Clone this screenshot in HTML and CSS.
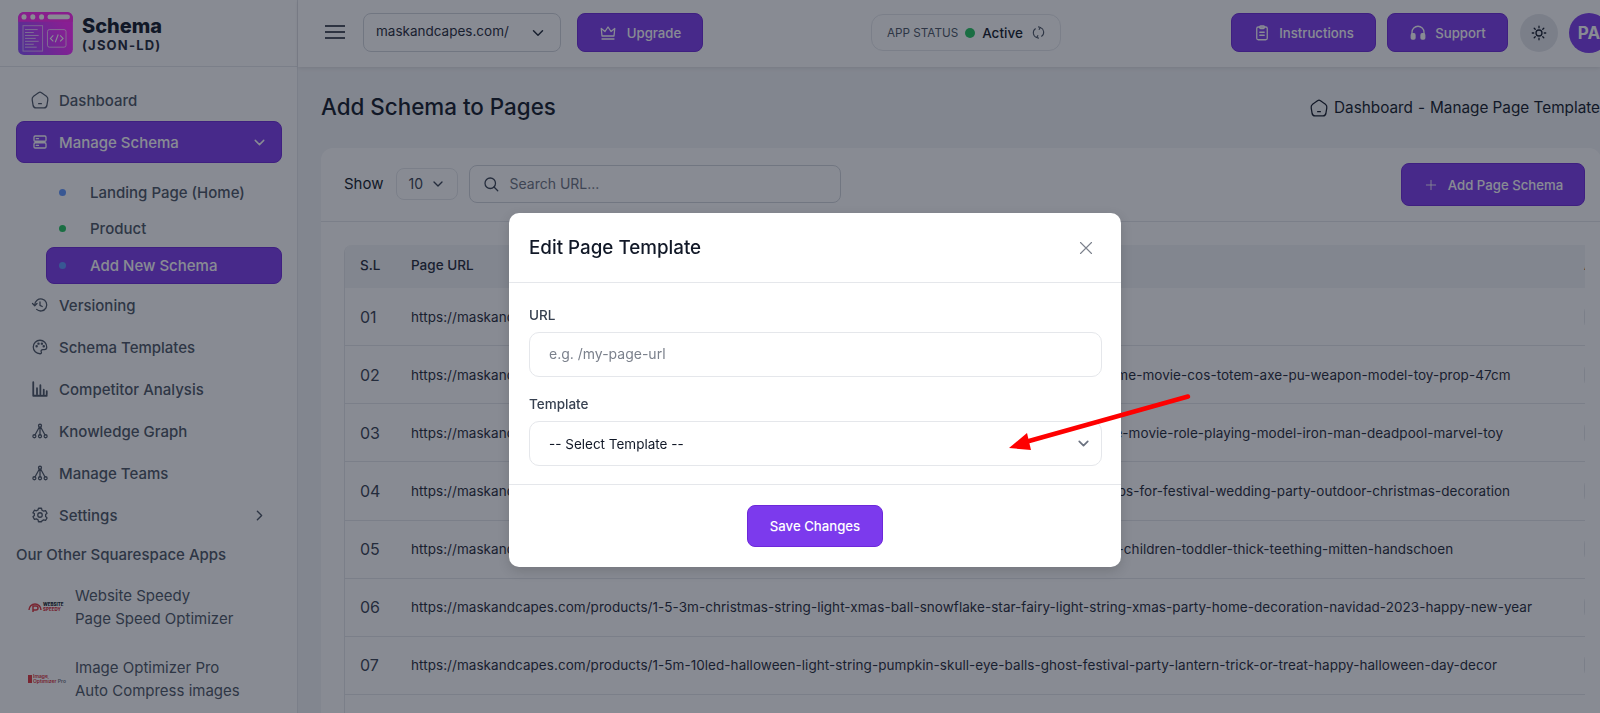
FILE: index.html
```html
<!DOCTYPE html>
<html lang="en">
<head>
    <meta charset="UTF-8">
    <meta name="viewport" content="width=device-width, initial-scale=1.0">
    <title>Schema (JSON-LD) - Add Schema to Pages</title>
    <link rel="stylesheet" href="styles.css">
</head>
<body>
    <div class="app">
        <aside class="sidebar">
            <div class="brand">
                <svg class="brand-logo" viewBox="0 0 56 44">
                    <defs>
                        <linearGradient id="logoGrad" x1="0" y1="1" x2="1" y2=".6">
                            <stop offset="0" stop-color="#8a4dff"/>
                            <stop offset="1" stop-color="#ff26ff"/>
                        </linearGradient>
                    </defs>
                    <rect width="56" height="44" rx="6" fill="url(#logoGrad)"/>
                    <path d="M0 10V6a6 6 0 0 1 6-6h44a6 6 0 0 1 6 6v4Z" fill="#ff26f0"/>
                    <circle cx="6" cy="5" r="2.6" fill="#fff"/>
                    <circle cx="15" cy="5" r="2.6" fill="#fff"/>
                    <circle cx="24" cy="5" r="2.6" fill="#fff"/>
                    <rect x="30" y="2.5" width="23" height="5" rx="2.5" fill="#fff"/>
                    <rect x="5" y="14" width="20" height="26" fill="none" stroke="#fff" stroke-opacity=".6"/>
                    <path d="M7 18h13M7 21h9M7 24h14M7 27h11M7 30h14M7 33h9M7 36h12" stroke="#fff" stroke-opacity=".7"/>
                    <rect x="30" y="18" width="19" height="18" rx="2" fill="none" stroke="#fff" stroke-opacity=".7"/>
                    <path d="M36 24l-3 3 3 3M43 24l3 3-3 3M41 23l-3 8" fill="none" stroke="#fff" stroke-width="1.1"/>
                </svg>
                <div class="brand-text">
                    <div class="brand-name">Schema</div>
                    <div class="brand-sub">(JSON-LD)</div>
                </div>
            </div>

            <nav class="nav">
                <a class="nav-item">
                    <svg class="ico ico-home" viewBox="0 0 24 24"><path d="M12 3.5Q13 3.5 19 8Q21 9.5 20.5 12L19.5 18Q19 20.5 16.5 20.5H7.5Q5 20.5 4.5 18L3.5 12Q3 9.5 5 8Q11 3.5 12 3.5Z"/><path d="M10.500 16h3"/></svg>
                    <span>Dashboard</span>
                </a>
                <a class="nav-item active">
                    <svg class="ico" viewBox="0 0 24 24"><rect x="4" y="4" width="16" height="7" rx="1.5"/><rect x="4" y="13" width="16" height="7" rx="1.5"/><path d="M7 7.5h3M7 16.5h3"/></svg>
                    <span>Manage Schema</span>
                    <svg class="chev" viewBox="0 0 24 24"><path d="M6 9l6 6 6-6"/></svg>
                </a>
                <div class="subnav">
                    <a class="sub-item"><i class="dot dot-blue"></i>Landing Page (Home)</a>
                    <a class="sub-item"><i class="dot dot-green"></i>Product</a>
                    <a class="sub-item active"><i class="dot dot-blue"></i>Add New Schema</a>
                </div>
                <a class="nav-item">
                    <svg class="ico" viewBox="0 0 24 24"><path d="M5 12a8 8 0 1 1 2.5 5.8"/><path d="M2 10l3 3 3-3"/><path d="M12 8v4.5l3 1.5"/></svg>
                    <span>Versioning</span>
                </a>
                <a class="nav-item">
                    <svg class="ico" viewBox="0 0 24 24"><path d="M12 3a9 9 0 1 0 0 18c1.800 0 2.300-1.200 1.700-2.300-.8-1.500.2-3.200 1.900-3.200H18c1.800 0 3-1.300 3-3.200C21 7 17 3 12 3Z"/><circle cx="7.500" cy="11" r=".8"/><circle cx="10" cy="7.500" r=".8"/><circle cx="14.500" cy="7.500" r=".8"/><circle cx="17" cy="11" r=".8"/></svg>
                    <span>Schema Templates</span>
                </a>
                <a class="nav-item">
                    <svg class="ico ico-bars" viewBox="0 0 24 24"><path d="M3 3v18h18"/><path d="M8 11v8M12.500 7v12M17 13v6M21 15v4"/></svg>
                    <span>Competitor Analysis</span>
                </a>
                <a class="nav-item">
                    <svg class="ico" viewBox="0 0 24 24"><circle cx="12" cy="5" r="2"/><circle cx="4.500" cy="19" r="2"/><circle cx="12" cy="19" r="2"/><circle cx="19.500" cy="19" r="2"/><path d="M11 7l-5.500 10M12 7v10M13 7l5.500 10"/></svg>
                    <span>Knowledge Graph</span>
                </a>
                <a class="nav-item">
                    <svg class="ico" viewBox="0 0 24 24"><circle cx="12" cy="5" r="2"/><circle cx="4.500" cy="19" r="2"/><circle cx="12" cy="19" r="2"/><circle cx="19.500" cy="19" r="2"/><path d="M11 7l-5.500 10M12 7v10M13 7l5.500 10"/></svg>
                    <span>Manage Teams</span>
                </a>
                <a class="nav-item">
                    <svg class="ico" viewBox="0 0 24 24"><circle cx="12" cy="12" r="3"/><path d="M10 3h4l.6 2.600 2.300 1.300 2.500-.8 2 3.500-1.900 1.800v2.600l1.900 1.800-2 3.500-2.500-.8-2.300 1.300L14 21h-4l-.6-2.600-2.300-1.300-2.500.8-2-3.500 1.900-1.800v-2.600L2.600 9.100l2-3.500 2.500.8 2.300-1.300Z"/></svg>
                    <span>Settings</span>
                    <svg class="chev" viewBox="0 0 24 24"><path d="M9 6l6 6-6 6"/></svg>
                </a>
            </nav>

            <div class="apps-title">Our Other Squarespace Apps</div>
            <a class="app-link">
                <div class="app-logo">
                    <svg viewBox="0 0 14 12"><path d="M1 9a6 6 0 0 1 12 0" fill="none" stroke="#e0343c" stroke-width="1.500"/><path d="M5 11V5h3a2 2 0 0 1 0 4H5" fill="none" stroke="#e0343c" stroke-width="1.500"/></svg>
                    <div class="app-logo-text"><b>WEBSITE</b><b class="red">SPEEDY</b></div>
                </div>
                <div>Website Speedy<br>Page Speed Optimizer</div>
            </a>
            <a class="app-link app-link-next">
                <div class="app-logo">
                    <svg class="app-logo-narrow" viewBox="0 0 6 12"><rect width="6" height="12" fill="#e0343c"/></svg>
                    <div class="app-logo-text app-logo-thin"><span class="red">Image</span><span class="red">Optimizer <em>Pro</em></span></div>
                </div>
                <div>Image Optimizer Pro<br>Auto Compress images</div>
            </a>
        </aside>

        <div class="main">
            <header class="topbar">
                <svg class="burger" viewBox="0 0 20 14"><path d="M0 1h20M0 7h20M0 13h20"/></svg>
                <div class="store-select">
                    <span>maskandcapes.com/</span>
                    <svg class="chev" viewBox="0 0 24 24"><path d="M6 9l6 6 6-6"/></svg>
                </div>
                <a class="btn btn-upgrade">
                    <svg class="ico" viewBox="0 0 24 24"><path d="M4 16L3 6l5 4 4-6 4 6 5-4-1 10Z"/><path d="M4 20h16"/></svg>
                    Upgrade
                </a>
                <div class="status">
                    <span class="status-label">APP STATUS</span>
                    <i class="status-dot"></i>
                    <span class="status-value">Active</span>
                    <svg class="ico" viewBox="0 0 24 24"><path d="M7 6a8 8 0 0 0 2 14"/><path d="M17 18a8 8 0 0 0-2-14"/><path d="M12 3l3 1-2 3M12 21l-3-1 2-3"/></svg>
                </div>
                <div class="topbar-right">
                    <a class="btn btn-instructions">
                        <svg class="ico" viewBox="0 0 24 24"><rect x="5" y="4" width="14" height="17" rx="2"/><rect x="9" y="2.500" width="6" height="3.500" rx="1"/><path d="M9 11h6M9 15h6"/></svg>
                        Instructions
                    </a>
                    <a class="btn btn-support">
                        <svg class="ico" viewBox="0 0 24 24"><path d="M4 14v-3a8 8 0 0 1 16 0v3"/><rect x="3" y="13" width="5" height="7" rx="1.500" fill="currentColor"/><rect x="16" y="13" width="5" height="7" rx="1.500" fill="currentColor"/></svg>
                        Support
                    </a>
                    <div class="theme-toggle">
                        <svg class="ico" viewBox="0 0 24 24"><circle cx="12" cy="12" r="4"/><path d="M12 3v2M12 19v2M3 12h2M19 12h2M5.600 5.600l1.400 1.400M17 17l1.400 1.400M5.600 18.400L7 17M17 7l1.400-1.400"/></svg>
                    </div>
                    <div class="avatar">PA</div>
                </div>
            </header>

            <section class="content">
                <div class="page-head">
                    <h1>Add Schema to Pages</h1>
                    <div class="crumbs">
                        <svg class="ico ico-home" viewBox="0 0 24 24"><path d="M12 3.500Q13 3.500 19 8Q21 9.500 20.500 12L19.500 18Q19 20.500 16.500 20.500H7.500Q5 20.500 4.500 18L3.500 12Q3 9.500 5 8Q11 3.500 12 3.500Z"/><path d="M10.500 16h3"/></svg>
                        <span>Dashboard</span><span class="crumb-sep">-</span><span>Manage Page Template</span>
                    </div>
                </div>

                <div class="card">
                    <div class="toolbar">
                        <span class="show-label">Show</span>
                        <div class="page-size">10
                            <svg class="chev" viewBox="0 0 24 24"><path d="M6 9l6 6 6-6"/></svg>
                        </div>
                        <div class="search">
                            <svg class="ico" viewBox="0 0 24 24"><circle cx="11" cy="11" r="7"/><path d="M16 16l5 5"/></svg>
                            <span>Search URL...</span>
                        </div>
                        <a class="btn btn-add">
                            <svg class="ico" viewBox="0 0 24 24"><path d="M12 5v14M5 12h14"/></svg>
                            Add Page Schema
                        </a>
                    </div>

                    <div class="table-wrap">
                        <table class="pages">
                            <thead>
                                <tr><th class="col-sl">S.L</th><th>Page URL</th><th class="col-action">Action</th></tr>
                            </thead>
                            <tbody>
                                <tr><td>01</td><td class="url">https://maskandcapes.com/</td><td><i class="row-btn"></i></td></tr>
                                <tr><td>02</td><td class="url">https://maskandcapes.com/products/hand-mades-1-1-scale-viking-warrior-replica-collectible-cosplay-for-game-movie-cos-totem-axe-pu-weapon-model-toy-prop-47cm</td><td><i class="row-btn"></i></td></tr>
                                <tr><td>03</td><td class="url">https://maskandcapes.com/products/premium-quality-xxl-1-1-scale-superhero-helmet-replica-cosplay-for-the-movie-role-playing-model-iron-man-deadpool-marvel-toy</td><td><i class="row-btn"></i></td></tr>
                                <tr><td>04</td><td class="url">https://maskandcapes.com/products/battery-powers-waterproof-usb-1-10m-copper-wire-led-string-light-lamps-for-festival-wedding-party-outdoor-christmas-decoration</td><td><i class="row-btn"></i></td></tr>
                                <tr><td>05</td><td class="url">https://maskandcapes.com/products/thick-wool-yarn-blends-1-pair-winter-warm-cartoon-animal-soft-knitted-children-toddler-thick-teething-mitten-handschoen</td><td><i class="row-btn"></i></td></tr>
                                <tr><td>06</td><td class="url">https://maskandcapes.com/products/1-5-3m-christmas-string-light-xmas-ball-snowflake-star-fairy-light-string-xmas-party-home-decoration-navidad-2023-happy-new-year</td><td><i class="row-btn"></i></td></tr>
                                <tr><td>07</td><td class="url">https://maskandcapes.com/products/1-5m-10led-halloween-light-string-pumpkin-skull-eye-balls-ghost-festival-party-lantern-trick-or-treat-happy-halloween-day-decor</td><td><i class="row-btn"></i></td></tr>
                                <tr><td>08</td><td class="url">https://maskandcapes.com/products/</td><td><i class="row-btn"></i></td></tr>
                            </tbody>
                        </table>
                    </div>
                </div>
            </section>
        </div>
    </div>

    <div class="overlay">
        <div class="modal">
            <div class="modal-head">
                <h2>Edit Page Template</h2>
                <svg class="modal-close" viewBox="0 0 14 14"><path d="M1.500 1.500l11 11M12.500 1.500l-11 11"/></svg>
            </div>
            <div class="modal-body">
                <label class="field-label">URL</label>
                <div class="field field-input"><span>e.g. /my-page-url</span></div>
                <label class="field-label field-label-next">Template</label>
                <div class="field field-select">
                    <span>-- Select Template --</span>
                    <svg class="chev" viewBox="0 0 24 24"><path d="M6 9l6 6 6-6"/></svg>
                </div>
            </div>
            <div class="modal-foot">
                <button class="btn-save">Save Changes</button>
            </div>
        </div>
    </div>

    <svg class="annotation" viewBox="0 0 200 70">
        <path d="M188 4.500L29 49" stroke="#fe0000" stroke-width="4.500" stroke-linecap="round" fill="none"/>
        <path d="M9 56L27 41L31 58Z" fill="#fe0000"/>
    </svg>
</body>
</html>
```

FILE: styles.css
```css
html, body {
    margin: 0;
    height: 100%;
    overflow: hidden;
}
body {
    font-family: Inter, "Noto Sans", Arial, sans-serif;
    font-size: 14px;
    color: #1f2937;
    background-color: #f3f4f6;
}
a { color: inherit; text-decoration: none; }
svg { display: block; flex: none; }
.ico, .chev, .burger, .modal-close {
    fill: none;
    stroke: currentColor;
    stroke-width: 1.7;
    stroke-linecap: round;
    stroke-linejoin: round;
}
.ico { width: 18px; height: 18px; }
.chev { width: 18px; height: 18px; stroke-width: 2; }

.app {
    display: flex;
    width: 1600px;
    height: 713px;
    overflow: hidden;
}

/* sidebar */
.sidebar {
    flex: none;
    width: 297px;
    height: 713px;
    background-color: white;
    border-right: 1px solid #e5e7eb;
    overflow: hidden;
    color: #4b5563;
    font-size: 15px;
    font-weight: 500;
}
.brand {
    display: flex;
    align-items: center;
    gap: 9px;
    height: 66px;
    padding-left: 18px;
    border-bottom: 1px solid #e5e7eb;
}
.brand-logo { width: 55px; height: 43px; }
.brand-text { padding-top: 1px; }
.brand-name {
    font-size: 20px;
    font-weight: 800;
    line-height: 24px;
    color: #111827;
}
.brand-sub {
    font-size: 13px;
    font-weight: 700;
    line-height: 15px;
    letter-spacing: 1.2px;
    color: #1f2937;
}
.nav { padding: 12px 15px 0 16px; }
.nav-item {
    display: flex;
    align-items: center;
    gap: 10px;
    height: 42px;
    padding: 0 15px;
    box-sizing: border-box;
    border-radius: 8px;
}
.nav-item .ico { width: 18px; height: 18px; }
.nav-item .ico-home { width: 22px; height: 22px; margin: 0 -2px; stroke-width: 1.400; }
.nav-item .chev { margin-left: auto; width: 17px; height: 17px; margin-right: -1px; }
.nav-item.active, .sub-item.active {
    background-color: #7c3aed;
    border: 1px solid #6d28d9;
    color: white;
}
.nav-item.active { padding: 0 14px; }
.nav-item .ico-bars { stroke-width: 2.400; }
.subnav { padding: 11px 0 .5px 30px; }
.sub-item {
    display: flex;
    align-items: center;
    height: 36.500px;
    padding-left: 13px;
    box-sizing: border-box;
    border-radius: 8px;
}
.sub-item.active { padding-left: 12px; }
.dot {
    width: 7px;
    height: 7px;
    margin-right: 24px;
    border-radius: 50%;
}
.dot-blue { background-color: #5f96ff; }
.dot-green { background-color: #22c55e; }
.apps-title {
    margin: 8px 0 0 16px;
    line-height: 22px;
}
.app-link {
    display: flex;
    align-items: center;
    gap: 9px;
    margin: 18px 0 0 28px;
    line-height: 23px;
    font-weight: 400;
}
.app-link-next { margin-top: 26px; }
.app-logo {
    display: flex;
    align-items: center;
    gap: 1px;
    width: 38px;
    height: 14px;
}
.app-logo svg { width: 14px; height: 12px; }
.app-logo .app-logo-narrow { width: 4px; height: 10px; }
.app-logo-text b, .app-logo-text span {
    display: block;
    font-size: 4.500px;
    line-height: 5px;
    font-weight: 800;
    color: #111827;
}
.app-logo-text .red { color: #d92d35; }
.app-logo-thin span { font-weight: 600; font-size: 5px; }
.app-logo-thin em { font-style: normal; color: #6b7280; }

/* top bar */
.main { flex: 1; min-width: 0; }
.topbar {
    display: flex;
    align-items: center;
    height: 67px;
    padding: 0 0 2px 27px;
    box-sizing: border-box;
    background-color: white;
    box-shadow: 0 1px 4px rgba(0,0,0,0.1);
    white-space: nowrap;
}
.topbar > * { flex: none; }
.burger { width: 20px; height: 14px; stroke-width: 1.500; color: #111827; margin-bottom: 2px; }
.store-select {
    display: flex;
    align-items: center;
    justify-content: space-between;
    width: 198px;
    height: 39px;
    margin-left: 18px;
    padding: 0 13px 0 12px;
    box-sizing: border-box;
    border: 1px solid #d1d5db;
    border-radius: 8px;
    font-size: 13.500px;
}
.store-select span { padding-bottom: 3px; }
.btn {
    display: flex;
    align-items: center;
    justify-content: center;
    box-sizing: border-box;
    background-color: #7c3aed;
    border: 1px solid #6d28d9;
    border-radius: 8px;
    color: white;
    font-size: 13.200px;
    font-weight: 500;
}
.btn-upgrade { gap: 10px; width: 126px; height: 39px; margin-left: 16px; }
.status {
    display: flex;
    align-items: center;
    width: 190px;
    height: 37px;
    margin-left: 168px;
    padding-left: 15px;
    box-sizing: border-box;
    border: 1px solid #e5e7eb;
    border-radius: 12px;
}
.status-label { font-size: 11.700px; color: #4b5563; }
.status-dot {
    width: 10px;
    height: 10px;
    margin: 0 7px 0 7px;
    border-radius: 50%;
    background-color: #22c55e;
}
.status-value { font-size: 13.500px; font-weight: 500; color: #111827; }
.status .ico { width: 15px; height: 15px; margin-left: 8px; color: #4b5563; }
.topbar-right {
    display: flex;
    align-items: center;
    gap: 11px;
    margin-left: 170px;
}
.btn-instructions { gap: 8px; width: 145px; height: 39px; }
.btn-support { gap: 8px; width: 121px; height: 39px; }
.theme-toggle {
    display: flex;
    flex: none;
    align-items: center;
    justify-content: center;
    width: 38px;
    height: 38px;
    margin-left: 1px;
    border-radius: 50%;
    background-color: #e5e7eb;
    color: #111827;
}
.avatar {
    flex: none;
    width: 40px;
    height: 40px;
    line-height: 40px;
    border-radius: 50%;
    background-color: #7c3aed;
    color: white;
    font-size: 17px;
    font-weight: 700;
    text-align: center;
}

/* page */
.content { padding: 0 0 0 23px; }
.page-head {
    display: flex;
    align-items: center;
    justify-content: space-between;
    height: 81px;
    white-space: nowrap;
}
.page-head h1 {
    margin: 0 0 3px 0;
    font-size: 22.400px;
    font-weight: 500;
    color: #111827;
}
.crumbs {
    display: flex;
    align-items: center;
    font-size: 15.300px;
    color: #111827;
}
.crumbs .ico-home { width: 22px; height: 22px; margin: 0 4px 0 0; stroke-width: 1.400; }
.crumb-sep { margin: 0 5px; }
.card {
    width: 1280px;
    height: 600px;
    background-color: white;
    border-radius: 12px;
}
.toolbar {
    display: flex;
    align-items: center;
    height: 73px;
    padding: 0 16px 0 23px;
    border-bottom: 1px solid #e5e7eb;
}
.show-label { font-size: 15px; color: #111827; margin-bottom: 2px; }
.page-size {
    display: flex;
    align-items: center;
    gap: 7px;
    width: 62px;
    height: 32px;
    margin: 0 0 2px 12px;
    padding-left: 12px;
    box-sizing: border-box;
    border: 1px solid #e5e7eb;
    border-radius: 8px;
    color: #374151;
}
.page-size .chev { width: 16px; height: 16px; }
.search {
    display: flex;
    align-items: center;
    gap: 10px;
    width: 372px;
    height: 38px;
    margin: 0 0 2px 11px;
    padding-left: 12px;
    box-sizing: border-box;
    border: 1px solid #d1d5db;
    border-radius: 8px;
    color: #6b7280;
}
.search .ico { color: #374151; }
.btn-add { gap: 9px; width: 184px; height: 43px; margin-left: auto; }
.btn-add .ico { width: 16px; height: 16px; stroke-width: 1.300; }
.table-wrap {
    width: 1240px;
    height: 490px;
    margin: 23px 0 0 23px;
    border-left: 1px solid #e5e7eb;
    border-radius: 8px 0 0 0;
    overflow: hidden;
}
.pages {
    width: 1400px;
    border-collapse: collapse;
    table-layout: fixed;
}
.pages th, .pages td {
    padding: 0 16px 0 15px;
    text-align: left;
    white-space: nowrap;
    overflow: hidden;
}
.pages th {
    height: 43px;
    padding-bottom: 3px;
    box-sizing: border-box;
    background-color: #f3f4f6;
    font-weight: 500;
    color: #1f2937;
    font-size: 13.500px;
}
.pages td {
    height: 57.125px;
    border-bottom: 1px solid #e5e7eb;
    color: #374151;
    font-size: 16px;
}
.pages .url { font-size: 13.500px; color: #1f2937; letter-spacing: .05px; }
.col-sl { width: 51px; }
.col-action { width: 176px; }
.row-btn {
    display: block;
    width: 26px;
    height: 26px;
    box-sizing: border-box;
    border: 1px solid #e5e7eb;
    border-radius: 8px;
}

/* modal over everything */
.overlay {
    position: fixed;
    inset: 0;
    display: flex;
    justify-content: center;
    align-items: flex-start;
    padding: 213px 0 0 30px;
    box-sizing: border-box;
    background-color: rgba(17,24,39,0.5);
}
.modal {
    width: 612px;
    height: 354px;
    background-color: white;
    border-radius: 10px;
    box-shadow: 0 4px 12px rgba(0,0,0,0.15);
}
.modal-head {
    display: flex;
    align-items: center;
    justify-content: space-between;
    height: 69px;
    padding: 0 28px 0 20px;
    border-bottom: 1px solid #e5e7eb;
}
.modal-head h2 {
    margin: 0;
    font-size: 18.800px;
    font-weight: 500;
    color: #111827;
}
.modal-close { width: 14px; height: 14px; stroke: #7b818c; stroke-width: 1.100; }
.modal-body {
    height: 202px;
    padding: 24px 20px 0 20px;
    border-bottom: 1px solid #e5e7eb;
    box-sizing: border-box;
}
.field-label {
    display: block;
    height: 17px;
    margin-bottom: 8px;
    line-height: 17px;
    font-size: 13.500px;
    font-weight: 500;
    color: #374151;
}
.field-label-next { margin-top: 19px; }
.field {
    display: flex;
    align-items: center;
    width: 573px;
    height: 45px;
    padding: 0 9px 0 19px;
    box-sizing: border-box;
    border: 1px solid #e5e7eb;
    border-radius: 10px;
}
.field-input { padding-bottom: 2px; color: #7b818c; }
.field-select { justify-content: space-between; color: #111827; font-size: 13.500px; }
.field-select .chev { color: #6b7280; stroke-width: 2.400; width: 17px; height: 17px; }
.modal-foot {
    display: flex;
    justify-content: center;
    padding-top: 20px;
}
.btn-save {
    width: 136px;
    height: 42px;
    background-color: #7c3aed;
    border: 1px solid #6d28d9;
    border-radius: 8px;
    color: white;
    font-family: inherit;
    font-size: 13.200px;
    font-weight: 500;
}

/* red marker drawn over the screenshot */
.annotation {
    position: fixed;
    left: 1000px;
    top: 392px;
    width: 200px;
    height: 70px;
}
```
